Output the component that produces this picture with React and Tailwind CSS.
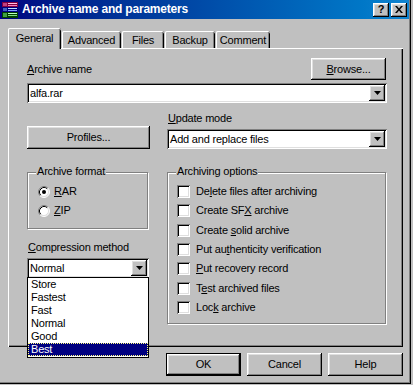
import React from "react";

const raised =
  "shadow-[inset_-1px_-1px_0_#000,inset_1px_1px_0_#fff,inset_-2px_-2px_0_#808080,inset_2px_2px_0_#dfdfdf]";
const sunken =
  "shadow-[inset_1px_1px_0_#808080,inset_-1px_-1px_0_#fff,inset_2px_2px_0_#000,inset_-2px_-2px_0_#dfdfdf]";

const U = ({ children }) => (
  <span className="underline decoration-1 underline-offset-[1px]">{children}</span>
);

const Arrow = () => (
  <div className={`w-[16px] h-[16px] bg-[#c0c0c0] ${raised} flex items-center justify-center`}>
    <svg width="7" height="4" viewBox="0 0 7 4">
      <polygon points="0,0 7,0 3.5,4" fill="#000" />
    </svg>
  </div>
);

const Combo = ({ children, className = "" }) => (
  <div className={`h-[20px] bg-white ${sunken} flex items-center pl-[3px] pr-[2px] ${className}`}>
    <span className="flex-1 leading-[13px]">{children}</span>
    <Arrow />
  </div>
);

const Button = ({ children, className = "" }) => (
  <div className={`bg-[#c0c0c0] ${raised} flex items-center justify-center leading-[13px] ${className}`}>
    {children}
  </div>
);

const Group = ({ legend, className = "", children }) => (
  <div className={`relative border border-[#808080] shadow-[inset_1px_1px_0_#fff,1px_1px_0_#fff] ${className}`}>
    <span className="absolute left-[8px] top-[-8px] px-[1px] bg-[#c0c0c0] leading-[13px]">{legend}</span>
    {children}
  </div>
);

const Check = ({ children }) => (
  <div className="h-[19.33px] flex items-center">
    <div className={`w-[13px] h-[13px] bg-white ${sunken}`} />
    <span className="ml-[6px] leading-[13px]">{children}</span>
  </div>
);

const Radio = ({ checked, children }) => (
  <div className="h-[19.33px] flex items-center">
    <svg width="12" height="12" viewBox="0 0 12 12">
      <circle cx="6" cy="6" r="5" fill="#fff" />
      <path d="M2.11 9.89 A5.5 5.5 0 0 1 9.89 2.11" stroke="#808080" fill="none" strokeWidth="1" />
      <path d="M9.89 2.11 A5.5 5.5 0 0 1 2.11 9.89" stroke="#fff" fill="none" strokeWidth="1" />
      <path d="M2.82 9.18 A4.5 4.5 0 0 1 9.18 2.82" stroke="#000" fill="none" strokeWidth="1" />
      <path d="M9.18 2.82 A4.5 4.5 0 0 1 2.82 9.18" stroke="#dfdfdf" fill="none" strokeWidth="1" />
      {checked && <circle cx="6" cy="6" r="2" fill="#000" />}
    </svg>
    <span className="ml-[4px] leading-[13px]">{children}</span>
  </div>
);

const Tab = ({ children, selected, className = "" }) =>
  selected ? (
    <div
      className={`relative z-10 h-[21px] mb-[-1px] bg-[#c0c0c0] rounded-t-[2px] shadow-[inset_1px_0_0_#fff,inset_0_1px_0_#fff,inset_-1px_0_0_#000,inset_-2px_0_0_#808080] flex justify-center pt-[4px] leading-[13px] ${className}`}
    >
      {children}
    </div>
  ) : (
    <div
      className={`h-[17px] bg-[#c0c0c0] rounded-t-[2px] shadow-[inset_1px_0_0_#fff,inset_0_1px_0_#fff,inset_-1px_0_0_#000,inset_-2px_0_0_#808080] flex justify-center pt-[3px] leading-[13px] ${className}`}
    >
      {children}
    </div>
  );

const RarIcon = () => (
  <svg width="16" height="16" viewBox="0 0 16 16">
    <rect x="0" y="0" width="16" height="5" fill="#800040" />
    <rect x="1" y="1" width="4" height="3" fill="#c04080" />
    <rect x="6" y="1" width="9" height="1" fill="#ffc0e0" />
    <rect x="6" y="3" width="9" height="1" fill="#ff80c0" />
    <rect x="0" y="5" width="16" height="5" fill="#000080" />
    <rect x="1" y="6" width="4" height="3" fill="#4060c0" />
    <rect x="6" y="6" width="9" height="1" fill="#c0e0ff" />
    <rect x="6" y="8" width="9" height="1" fill="#80a0ff" />
    <rect x="0" y="10" width="16" height="6" fill="#004000" />
    <rect x="1" y="11" width="4" height="4" fill="#40a040" />
    <rect x="6" y="11" width="9" height="1" fill="#c0ffc0" />
    <rect x="6" y="13" width="9" height="1" fill="#80e080" />
  </svg>
);

export default function App() {
  return (
    <div className="w-[413px] h-[385px] bg-[#c0c0c0] font-['Liberation_Sans',Arial,sans-serif] text-[11px] tracking-[-0.2px] text-black">
      <div className="w-[411px] h-[384px] shadow-[inset_-1px_-1px_0_#000,inset_-2px_-2px_0_#808080] flex flex-col">
        {/* title bar */}
        <div className="w-[409px] h-[19px] bg-gradient-to-r from-[#000080] to-[#1084d0] flex items-center pl-[2px] pr-[2px]">
          <RarIcon />
          <span className="ml-[4px] text-white font-bold text-[12px] leading-[15px]">Archive name and parameters</span>
          <div className="ml-auto flex items-center">
            <div className={`w-[16px] h-[14px] bg-[#c0c0c0] ${raised} flex items-center justify-center font-bold text-[11px] leading-[11px]`}>
              ?
            </div>
            <div className={`ml-[2px] w-[16px] h-[14px] bg-[#c0c0c0] ${raised} flex items-center justify-center`}>
              <svg width="8" height="7" viewBox="0 0 8 7">
                <path d="M0 0 L2 0 L4 2.5 L6 0 L8 0 L5 3.5 L8 7 L6 7 L4 4.5 L2 7 L0 7 L3 3.5 Z" fill="#000" />
              </svg>
            </div>
          </div>
        </div>

        <div className="pl-[8px] pt-[9px]">
          {/* tabs */}
          <div className="flex items-end h-[20px]">
            <Tab selected className="w-[53px]">General</Tab>
            <Tab className="w-[59px] ml-[1px]">Advanced</Tab>
            <Tab className="w-[42px] ml-[1px]">Files</Tab>
            <Tab className="w-[50px] ml-[1px]">Backup</Tab>
            <Tab className="w-[54px] ml-[1px]">Comment</Tab>
          </div>

          {/* panel */}
          <div className="w-[395px] h-[299px] shadow-[inset_1px_1px_0_#fff,inset_-1px_-1px_0_#000,inset_-2px_-2px_0_#808080] pl-[19px] pt-[10px]">
            <div className="w-[360px] flex items-center justify-between">
              <span className="leading-[13px]">
                <U>A</U>rchive name
              </span>
              <Button className="w-[75px] h-[22px] mr-[1px]">
                <span>
                  <U>B</U>rowse...
                </span>
              </Button>
            </div>
            <Combo className="w-[360px] mt-[3px]">alfa.rar</Combo>

            <div className="flex items-end mt-[9px]">
              <Button className="w-[123px] h-[23px]">Profiles...</Button>
              <div className="ml-[17px] w-[220px] flex flex-col">
                <span className="leading-[13px] ml-[1px]">
                  <U>U</U>pdate mode
                </span>
                <Combo className="mt-[4px]">Add and replace files</Combo>
              </div>
            </div>

            <div className="flex items-start mt-[23px]">
              <div className="w-[122px] flex flex-col">
                <Group legend="Archive format" className="w-[121px] h-[57px] pl-[10px] pt-[9px]">
                  <Radio checked>
                    <U>R</U>AR
                  </Radio>
                  <Radio>
                    <U>Z</U>IP
                  </Radio>
                </Group>
                <span className="leading-[13px] mt-[12px] ml-[1px]">
                  <U>C</U>ompression method
                </span>
                <div className="relative mt-[4px]">
                  <Combo className="w-[122px]">Normal</Combo>
                  <div className="absolute z-20 left-0 top-[19px] w-[122px] h-[81px] border border-black bg-white flex flex-col">
                    {["Store", "Fastest", "Fast", "Normal", "Good"].map((t) => (
                      <div key={t} className="h-[13px] leading-[13px] pl-[3px]">
                        {t}
                      </div>
                    ))}
                    <div className="h-[13px] leading-[11px] pl-[2px] bg-[#000080] text-white border border-dotted border-[#ffff80]">
                      Best
                    </div>
                  </div>
                </div>
              </div>

              <Group legend="Archiving options" className="ml-[18px] w-[219px] h-[152px] pl-[9px] pt-[9px]">
                <Check>
                  De<U>l</U>ete files after archiving
                </Check>
                <Check>
                  Create SF<U>X</U> archive
                </Check>
                <Check>
                  Create <U>s</U>olid archive
                </Check>
                <Check>
                  Put au<U>t</U>henticity verification
                </Check>
                <Check>
                  <U>P</U>ut recovery record
                </Check>
                <Check>
                  T<U>e</U>st archived files
                </Check>
                <Check>
                  Loc<U>k</U> archive
                </Check>
              </Group>
            </div>
          </div>

          {/* buttons */}
          <div className="w-[395px] flex justify-end gap-[6px] mt-[6px]">
            <div className="w-[75px] h-[23px] border border-black flex">
              <Button className="flex-1">OK</Button>
            </div>
            <Button className="w-[75px] h-[23px]">Cancel</Button>
            <Button className="w-[75px] h-[23px]">Help</Button>
          </div>
        </div>
      </div>
    </div>
  );
}
